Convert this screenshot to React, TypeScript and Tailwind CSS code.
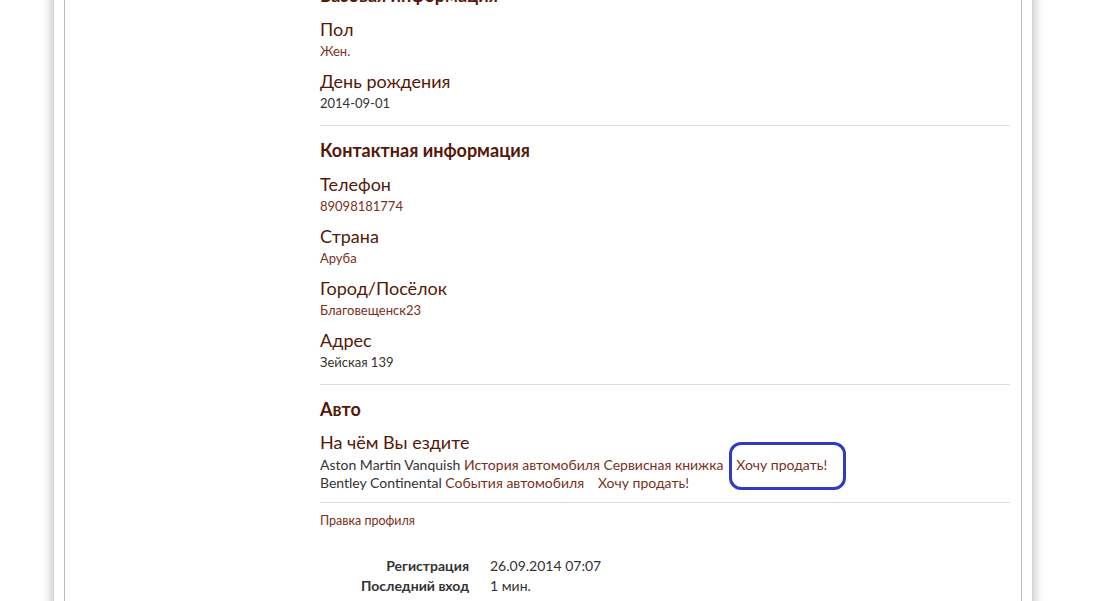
import React from "react";

const font = { fontFamily: "Lato, 'Open Sans', sans-serif" };

function Field({ label, value, link = true }: { label: string; value: string; link?: boolean }) {
  return (
    <div className="mb-[8px]">
      <div className="text-[18px] leading-[22px] text-[#551808]">{label}</div>
      <div className={`text-[13px] leading-[22px] ${link ? "text-[#7a3020]" : "text-[#333]"}`}>{value}</div>
    </div>
  );
}

function SectionTitle({ children }: { children: React.ReactNode }) {
  return <div className="text-[18px] leading-[22px] font-bold text-[#551808] mb-[12px]">{children}</div>;
}

function Rule({ className }: { className: string }) {
  return <div className={`border-t border-[#ddd] ${className}`} />;
}

export default function App() {
  return (
    <div className="h-[601px] overflow-hidden bg-white" style={font}>
      <div className="ml-[54px] w-[978px] h-[660px] bg-white px-[10px] shadow-[0_0_12px_rgba(0,0,0,0.35)]">
        <div className="h-full border-x border-[#bbb] pl-[255px] pr-[11px]">
          <div className="-mt-[16px]">
            {/* Базовая информация */}
            <SectionTitle>Базовая информация</SectionTitle>
            <Field label="Пол" value="Жен." />
            <Field label="День рождения" value="2014-09-01" link={false} />
            <Rule className="mt-[11px] mb-[13px]" />

            {/* Контактная информация */}
            <SectionTitle>Контактная информация</SectionTitle>
            <Field label="Телефон" value="89098181774" />
            <Field label="Страна" value="Аруба" />
            <Field label="Город/Посёлок" value="Благовещенск23" />
            <Field label="Адрес" value="Зейская 139" link={false} />
            <Rule className="mt-[11px] mb-[13px]" />

            {/* Авто */}
            <SectionTitle>Авто</SectionTitle>
            <div className="text-[18px] leading-[22px] text-[#551808] -mt-[1px]">На чём Вы ездите</div>
            <div className="mt-[3px] text-[14px] leading-[18px] text-[#333]">
              <div>
                Aston Martin Vanquish <span className="text-[#7a3020]">История автомобиля</span>{" "}
                <span className="text-[#7a3020]">Сервисная книжка</span>
                <span className="relative ml-[13px] text-[#7a3020]">
                  Хочу продать!
                  <span className="absolute -left-[7px] -top-[14px] w-[117px] h-[48px] border-[3px] border-[#2f3cc0] rounded-[12px]" />
                </span>
              </div>
              <div>
                Bentley Continental <span className="text-[#7a3020]">События автомобиля</span>
                <span className="ml-[14px] text-[#7a3020]">Хочу продать!</span>
              </div>
            </div>
            <Rule className="mt-[10px] mb-[9px]" />
            <div className="text-[12.5px] leading-[18px] text-[#7a3020]">Правка профиля</div>

            <div className="mt-[26px] grid grid-cols-[149px_1fr] gap-x-[21px] text-[14px] leading-[20px] text-[#333]">
              <div className="text-right font-bold">Регистрация</div>
              <div>26.09.2014 07:07</div>
              <div className="text-right font-bold">Последний вход</div>
              <div>1 мин.</div>
            </div>
          </div>
        </div>
      </div>
    </div>
  );
}
